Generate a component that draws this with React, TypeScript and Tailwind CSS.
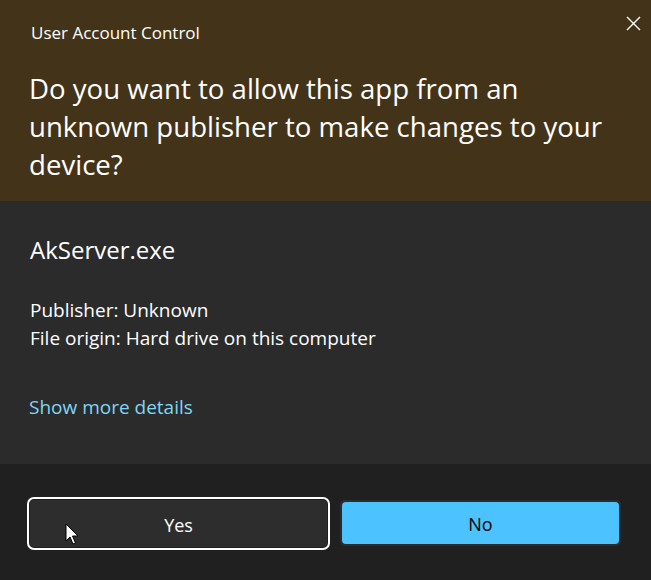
export default function App() {
  return (
    <div className="relative w-[651px] h-[580px] flex flex-col text-white font-['Open_Sans',sans-serif] overflow-hidden">
      <div className="h-[201px] bg-[#433419] pl-[29px] pr-[10px] pt-[20px] flex flex-col">
        <div className="flex justify-between items-start">
          <p className="text-[17px] leading-[24px] pl-[2px] pt-[1px]">User Account Control</p>
          <button className="mt-[-5px] w-[16px] h-[16px] flex items-center justify-center" aria-label="Close">
            <svg width="15" height="15" viewBox="0 0 15 15">
              <path d="M1 1L14 14M14 1L1 14" stroke="#ffffff" strokeWidth="1.4" />
            </svg>
          </button>
        </div>
        <h1 className="mt-[24px] text-[27.6px] leading-[38px] font-normal">
          Do you want to allow this app from an unknown publisher to make changes to your device?
        </h1>
      </div>
      <div className="h-[263px] bg-[#2b2b2b] pl-[30px] pt-[32px]">
        <p className="text-[24px] leading-[33px]">AkServer.exe</p>
        <div className="mt-[30px] text-[19px] leading-[28px]">
          <p>Publisher: Unknown</p>
          <p>File origin: Hard drive on this computer</p>
        </div>
        <p className="mt-[41px] text-[19px] leading-[28px] text-[#80d6f3] -ml-[1px]">Show more details</p>
      </div>
      <div className="flex-1 bg-[#202020] flex items-start pl-[27px] pt-[33px] gap-[10px]">
        <div className="w-[303px] h-[53px] rounded-[7px] border-2 border-white p-[1px]">
          <button className="w-full h-full rounded-[4px] bg-[#2d2d2d] text-[18px] leading-[24px] pt-[2px] text-white">Yes</button>
        </div>
        <div className="w-[281px] h-[46px] mt-[3px] rounded-[5px] bg-[#2c2c2c] p-[2px]">
          <button className="w-full h-full rounded-[4px] bg-[#4cc2ff] text-[18px] leading-[24px] pt-[2px] text-black">No</button>
        </div>
      </div>
      <svg className="absolute left-[65px] top-[523px]" width="14" height="23" viewBox="0 0 14 23">
        <path d="M1 1V18L5 14L8 21L10.5 20L7.5 13H13Z" fill="#ffffff" stroke="#000000" strokeWidth="1" strokeLinejoin="round" />
      </svg>
    </div>
  );
}
